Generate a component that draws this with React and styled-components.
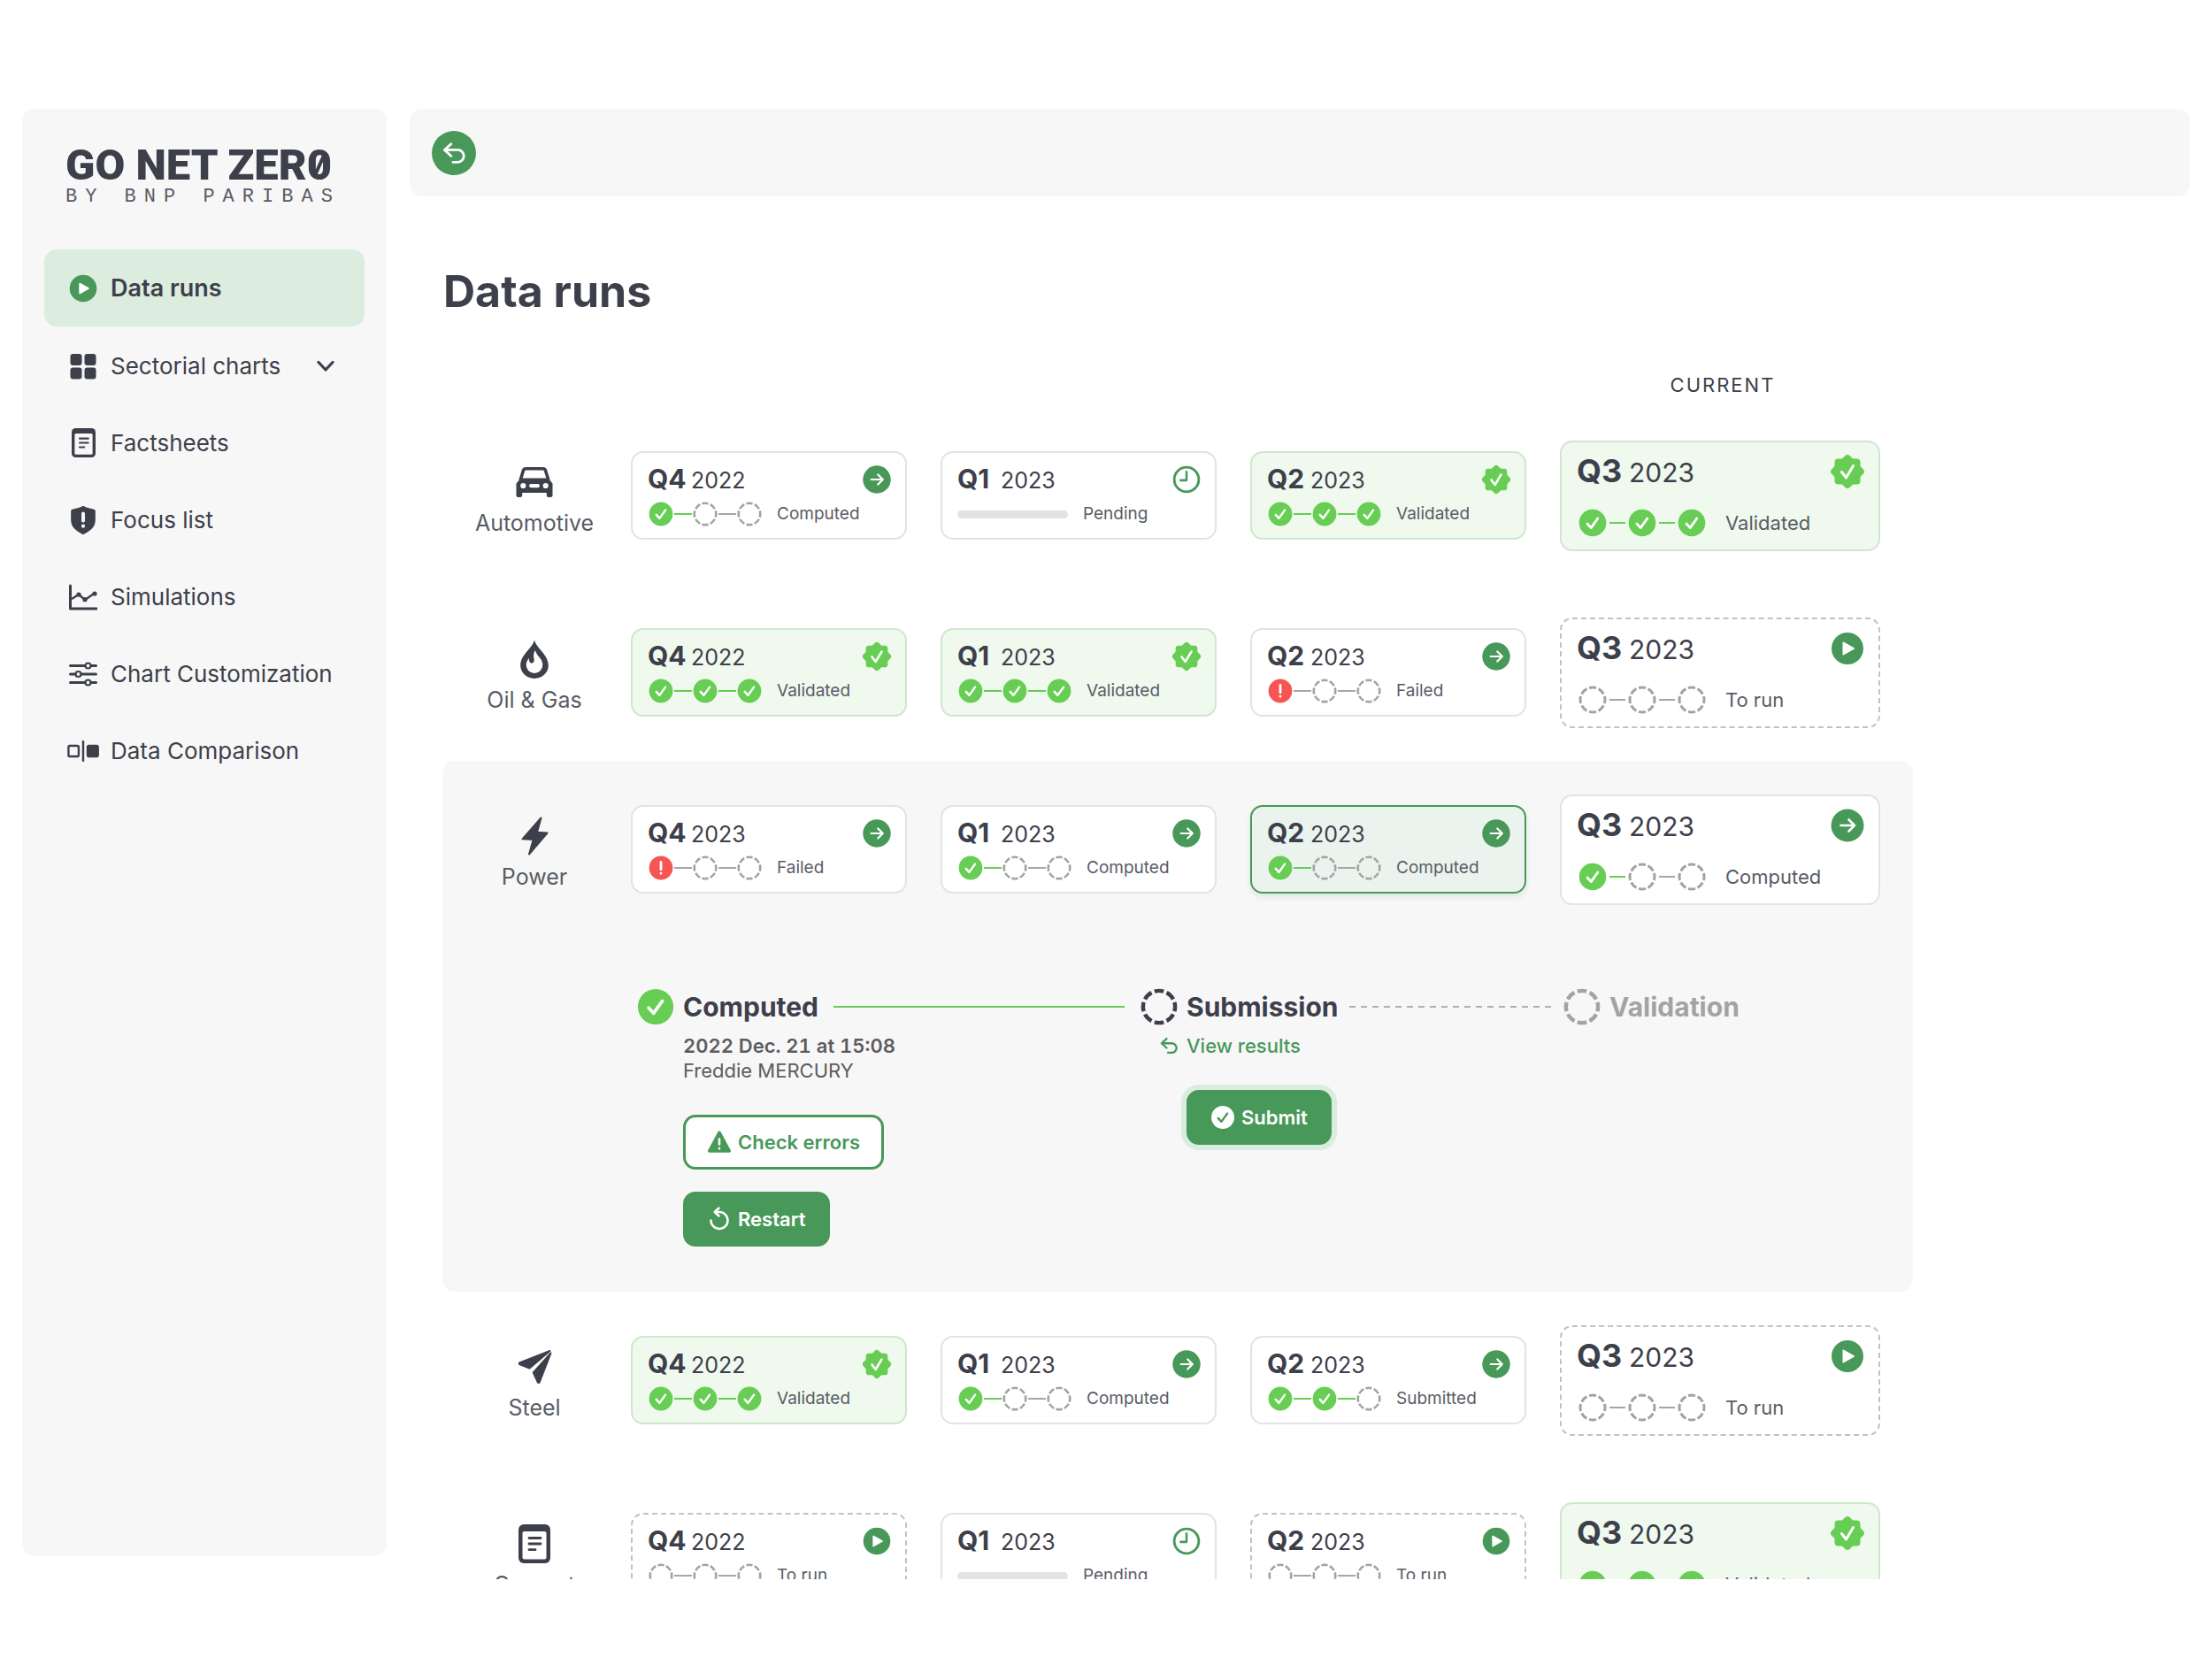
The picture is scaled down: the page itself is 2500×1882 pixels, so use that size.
import React from "react";
import styled, { createGlobalStyle, css } from "styled-components";

const color = {
  ink: "#3d3f4a",
  text: "#5a5c66",
  muted: "#a3a3a3",
  line: "#a6a6a6",
  panel: "#f7f7f7",
  border: "#e3e3e3",
  green: "#489959",
  lime: "#68cd54",
  mint: "#dcecdf",
  mintCard: "#eff9ee",
  mintBorder: "#cfe7cd",
  red: "#f65554",
};

const Global = createGlobalStyle`
  *, *::before, *::after { box-sizing: border-box; }
  body { margin: 0; background: #fff; color: ${color.ink}; font-family: Inter, "Liberation Sans", sans-serif; }
  h1, h2, p, ul { margin: 0; padding: 0; }
  ul { list-style: none; }
  button { font: inherit; color: inherit; cursor: pointer; }
  a { color: inherit; text-decoration: none; }
  svg { display: block; flex: none; }
`;

/* ---------- layout ---------- */

const Page = styled.div`
  display: flex;
  gap: 26px;
  height: 100vh;
  padding: 123px 25px 97px;
`;

const Sidebar = styled.aside`
  flex: none;
  width: 412px;
  margin-bottom: 26px;
  padding: 40px 25px;
  border-radius: 14px;
  background: ${color.panel};
`;

const Main = styled.main`
  display: flex;
  flex: 1;
  flex-direction: column;
  min-width: 0;
  overflow: hidden;
`;

const TopBar = styled.header`
  display: flex;
  flex: none;
  align-items: center;
  height: 99px;
  padding: 0 25px;
  border-radius: 14px;
  background: ${color.panel};
`;

const RoundButton = styled.button`
  display: grid;
  place-items: center;
  width: 50px;
  height: 50px;
  padding: 0;
  border: 0;
  border-radius: 50%;
  background: ${color.green};
  color: #fff;
`;

const Content = styled.div`
  flex: 1;
  min-height: 0;
  padding: 75px 37px 0;
  overflow: hidden;
`;

const Board = styled.div`
  max-width: 1662px;
`;

/* ---------- sidebar ---------- */

const Logo = styled.div`
  padding-left: 24px;
  margin-bottom: 47px;
`;

const LogoName = styled.div`
  font: 900 49px/48px Roboto, "Liberation Sans", sans-serif;
  white-space: nowrap;
`;

const SlashedZero = styled.span`
  position: relative;
  &::after {
    content: "";
    position: absolute;
    left: 12px;
    top: 17px;
    width: 4px;
    height: 24px;
    background: ${color.ink};
    transform: rotate(24deg);
  }
`;

const LogoBy = styled.div`
  font: 400 22px/24px "Liberation Mono", monospace;
  letter-spacing: 9px;
  white-space: nowrap;
  color: ${color.text};
`;

const NavLink = styled.a`
  display: flex;
  align-items: center;
  gap: 13px;
  height: 87px;
  padding: 0 34px 0 26px;
  border-radius: 14px;
  font-size: 26px;
  line-height: 32px;
  white-space: nowrap;
  ${(p) =>
    p.$active &&
    css`
      margin-bottom: 1px;
      background: ${color.mint};
      font-size: 27px;
      font-weight: 600;
    `}
`;

const NavIcon = styled.span`
  display: grid;
  place-items: center;
  width: 36px;
`;

const NavText = styled.span`
  flex: 1;
`;

/* ---------- board ---------- */

const Title = styled.h1`
  padding-left: 1px;
  font-size: 50px;
  font-weight: 700;
  line-height: 64px;
`;

const columns = css`
  display: grid;
  grid-template-columns: 142px 312fr 312fr 312fr 362fr;
  column-gap: 38px;
  padding: 0 37px 0 33px;
`;

const HeadRow = styled.div`
  ${columns}
  margin-top: 60px;
  padding-bottom: 11px;
`;

const HeadCell = styled.div`
  grid-column: 5;
  padding-left: 6px;
  font-size: 22px;
  line-height: 28px;
  letter-spacing: 2px;
  text-align: center;
`;

const Sector = styled.section`
  border-radius: 14px;
  background: ${(p) => (p.$open ? color.panel : "transparent")};
`;

const SectorRow = styled.div`
  ${columns}
  align-items: center;
  height: 200px;
`;

const SectorLabel = styled.div`
  display: flex;
  flex-direction: column;
  align-items: center;
  gap: 10px;
  padding-top: 8px;
  color: ${color.ink};
`;

const SectorName = styled.h2`
  font-size: 25px;
  font-weight: 400;
  line-height: 28px;
  white-space: nowrap;
  color: ${color.text};
`;

const Card = styled.article`
  padding: ${(p) => (p.$large ? "13px 15px 14px 17px" : "13px 15px 14px 17px")};
  border: 2px solid ${color.border};
  border-radius: 14px;
  background: #fff;
  ${(p) =>
    p.$look === "validated" &&
    css`
      border-color: ${color.mintBorder};
      background: ${color.mintCard};
    `}
  ${(p) =>
    p.$look === "torun" &&
    css`
      border: 2px dashed #c2c2c2;
    `}
  ${(p) =>
    p.$selected &&
    css`
      border-color: ${color.green};
      background: #ebf3ee;
      box-shadow: 0 4px 6px rgba(72, 153, 89, 0.14);
    `}
`;

const CardTop = styled.div`
  display: flex;
  align-items: center;
  justify-content: space-between;
  height: ${(p) => (p.$large ? 40 : 34)}px;
`;

const Period = styled.div`
  display: flex;
  align-items: baseline;
  line-height: 36px;
`;

const Quarter = styled.strong`
  width: ${(p) => (p.$large ? 59 : 49)}px;
  font-size: ${(p) => (p.$large ? 36 : 30)}px;
  font-weight: 700;
`;

const Year = styled.span`
  font-size: ${(p) => (p.$large ? 30 : 25)}px;
`;

const CardAction = styled.button`
  display: block;
  padding: 0;
  border: 0;
  background: none;
`;

const CardBottom = styled.div`
  display: flex;
  align-items: center;
  gap: ${(p) => (p.$large ? 22 : 17)}px;
  height: ${(p) => (p.$large ? 32 : 26)}px;
  margin-top: ${(p) => (p.$large ? 22 : 9)}px;
`;

const Track = styled.div`
  display: flex;
  align-items: center;
  padding-left: ${(p) => (p.$large ? 2 : 1)}px;
`;

const Link = styled.span`
  width: ${(p) => (p.$large ? 18 : 20)}px;
  height: 2px;
  margin: 0 ${(p) => (p.$large ? 3 : 1)}px;
  background: ${(p) => (p.$done ? color.lime : color.line)};
`;

const PendingBar = styled.div`
  width: 125px;
  height: 9px;
  border-radius: 5px;
  background: #e3e3e3;
`;

const Status = styled.span`
  font-size: ${(p) => (p.$large ? 22 : 19)}px;
  line-height: 26px;
  white-space: nowrap;
  color: ${color.text};
`;

/* ---------- run detail ---------- */

const Detail = styled.div`
  display: grid;
  grid-template-columns: 569fr 478fr 358fr;
  padding: 57px 37px 51px 220px;
`;

const StageHead = styled.div`
  display: flex;
  align-items: center;
  gap: 10px;
  height: 42px;
  color: ${(p) => (p.$muted ? color.muted : color.ink)};
`;

const StageName = styled.h2`
  font-size: 30px;
  font-weight: 700;
  line-height: 36px;
`;

const StageLine = styled.span`
  flex: 1;
  height: 2px;
  margin: 0 ${(p) => (p.$dashed ? "11px 0 2px" : "18px 0 7px")};
  background: ${(p) =>
    p.$dashed
      ? "repeating-linear-gradient(90deg, #b0b0b0 0 7px, transparent 7px 13px)"
      : color.lime};
`;

const StageBody = styled.div`
  display: flex;
  flex-direction: column;
  align-items: flex-start;
  margin-top: 9px;
  padding-left: 52px;
  font-size: 22px;
  line-height: 28px;
  color: #5c5c60;
`;

const RunDate = styled.p`
  font-weight: 600;
  font-variant-numeric: tabular-nums;
`;

const ResultsLink = styled.a`
  display: flex;
  align-items: center;
  gap: 10px;
  margin-left: -30px;
  font-weight: 500;
  color: ${color.green};
`;

const Actions = styled.div`
  display: flex;
  flex-direction: column;
  align-items: flex-start;
  gap: 25px;
  margin-top: 36px;
`;

const Button = styled.button`
  display: flex;
  align-items: center;
  gap: 7px;
  height: 62px;
  padding: 0 24px;
  border: 3px solid ${color.green};
  border-radius: 14px;
  background: ${(p) => (p.$outline ? "#fff" : color.green)};
  font-size: 22px;
  font-weight: 600;
  color: ${(p) => (p.$outline ? color.green : "#fff")};
  ${(p) =>
    p.$focus &&
    css`
      box-shadow: 0 0 0 6px #d9ecdd;
    `}
`;

/* ---------- icons ---------- */

const ReturnIcon = ({ size, width = 2.6 }) => (
  <svg width={size} height={size} viewBox="0 0 24 24" fill="none" stroke="currentColor" strokeWidth={width} strokeLinecap="round" strokeLinejoin="round">
    <path d="M9 2.5 2.2 8.7 9 15M2.2 8.7H16a6.4 6.4 0 0 1 0 12.8h-5" />
  </svg>
);

const PlayDisc = ({ size }) => (
  <svg width={size} height={size} viewBox="0 0 40 40">
    <circle cx="20" cy="20" r="18" fill={color.green} />
    <path d="M15.5 13.5v13L27 20z" fill="#fff" stroke="#fff" strokeWidth="2" strokeLinejoin="round" />
  </svg>
);

const ArrowDisc = ({ size }) => (
  <svg width={size} height={size} viewBox="0 0 40 40">
    <circle cx="20" cy="20" r="18.5" fill={color.green} />
    <path d="M12.5 20h15.5M21.5 13.5l6.5 6.5-6.5 6.5" fill="none" stroke="#fff" strokeWidth="2.6" strokeLinecap="round" strokeLinejoin="round" />
  </svg>
);

const ClockIcon = ({ size }) => (
  <svg width={size} height={size} viewBox="0 0 40 40" fill="none" stroke={color.green} strokeWidth="3.4">
    <circle cx="20" cy="20" r="16.3" />
    <path d="M20 8.5V21H11" strokeWidth="3" strokeLinejoin="round" />
  </svg>
);

const BadgeIcon = ({ size }) => (
  <svg width={size} height={size} viewBox="0 0 40 40">
    <g fill={color.lime}>
      <rect x="5.5" y="5.5" width="29" height="29" rx="4" />
      <rect x="5.5" y="5.5" width="29" height="29" rx="4" transform="rotate(45 20 20)" />
    </g>
    <path d="M13.5 20.5l5 6.5 8-13.5" fill="none" stroke="#fff" strokeWidth="3" strokeLinecap="round" strokeLinejoin="round" />
  </svg>
);

const Check = ({ stroke = "#fff" }) => (
  <path d="M10 17l4.2 4.6L21.8 11" fill="none" stroke={stroke} strokeWidth="2.8" strokeLinecap="round" strokeLinejoin="round" />
);

const StepIcon = ({ state, size, ring = color.muted, ringWidth = 3 }) => (
  <svg width={size} height={size} viewBox="0 0 32 32">
    {state === "done" && (
      <>
        <circle cx="16" cy="16" r="15.3" fill={color.lime} />
        <Check />
      </>
    )}
    {state === "failed" && (
      <>
        <circle cx="16" cy="16" r="15.3" fill={color.red} />
        <path d="M16 8.5v9.5M16 23v.2" stroke="#fff" strokeWidth="3.2" strokeLinecap="round" />
      </>
    )}
    {state === "todo" && (
      <circle cx="16" cy="16" r={15.5 - ringWidth / 2} fill="none" stroke={ring} strokeWidth={ringWidth} pathLength="80" strokeDasharray="7.5 2.5" strokeDashoffset="3.75" />
    )}
  </svg>
);

const GridIcon = () => (
  <svg width="32" height="32" viewBox="0 0 32 32" fill={color.ink}>
    <rect x="1.5" y="2" width="13" height="13" rx="3" />
    <rect x="17.5" y="2" width="13" height="13" rx="3" />
    <rect x="1.5" y="17.5" width="13" height="13" rx="3" />
    <rect x="17.5" y="17.5" width="13" height="13" rx="3" />
  </svg>
);

const DocIcon = ({ size, ground = "#fff" }) => (
  <svg width={size} height={size} viewBox="0 0 44 44">
    <rect x="4" width="36" height="44" rx="6" fill={color.ink} />
    <rect x="8.5" y="8" width="27" height="31.5" rx="2" fill={ground} />
    <path d="M16 15.5h13M16 22h13M16 28.7h7" stroke={color.ink} strokeWidth="2.8" strokeLinecap="round" />
  </svg>
);

const ShieldIcon = () => (
  <svg width="34" height="34" viewBox="0 0 34 34">
    <path d="M17 .8c4 2.2 8.5 3.2 12.3 4a2 2 0 0 1 1.5 2V17c0 8-6.3 12.5-13.8 16.3C9.5 29.5 3.2 25 3.2 17V6.8a2 2 0 0 1 1.5-2C8.5 4 13 3 17 .8z" fill={color.ink} />
    <path d="M17 9.5v8M17 23.5v.2" stroke="#f7f7f7" strokeWidth="4" strokeLinecap="round" />
  </svg>
);

const ChartIcon = () => (
  <svg width="32" height="32" viewBox="0 0 32 32" fill="none" stroke={color.ink}>
    <path d="M1.5 3v26H31" strokeWidth="3" strokeLinecap="round" strokeLinejoin="round" />
    <path d="M3 18l8-5 7 6 11-7.5" strokeWidth="2.4" />
    <g fill={color.ink} stroke="none">
      <circle cx="11" cy="13" r="2.6" />
      <circle cx="18" cy="18.7" r="2.6" />
      <circle cx="29" cy="12" r="2.6" />
    </g>
  </svg>
);

const SlidersIcon = () => (
  <svg width="32" height="32" viewBox="0 0 32 32" fill="#f7f7f7" stroke={color.ink} strokeLinecap="round">
    <path d="M1.5 6.5h29M1.5 16h29M1.5 25.5h29" strokeWidth="3" />
    <g strokeWidth="2.2">
      <circle cx="21.5" cy="6.5" r="3" />
      <circle cx="10.5" cy="16" r="3" />
      <circle cx="21.5" cy="25.5" r="3" />
    </g>
  </svg>
);

const CompareIcon = () => (
  <svg width="36" height="24" viewBox="0 0 36 24" fill="none" stroke={color.ink} strokeWidth="2.4">
    <rect x="1.4" y="6" width="11.5" height="12" rx="1.5" />
    <path d="M18 1v22" strokeLinecap="round" />
    <rect x="23" y="6" width="11.7" height="12" rx="1.5" fill={color.ink} />
  </svg>
);

const ChevronIcon = () => (
  <svg width="20" height="14" viewBox="0 0 20 14" fill="none" stroke={color.ink} strokeWidth="3.2" strokeLinecap="round" strokeLinejoin="round">
    <path d="M2 2.5l8 8.5 8-8.5" />
  </svg>
);

const CarIcon = () => (
  <svg width="44" height="44" viewBox="0 0 44 44">
    <path d="M6 20L9.5 8.7A3 3 0 0 1 12.3 6.7H31.7A3 3 0 0 1 34.5 8.7L38 20" fill="none" stroke={color.ink} strokeWidth="3.6" />
    <path d="M6.5 17.5h31l5 6V37a2 2 0 0 1-2 2h-2.7a2 2 0 0 1-2-2v-3H8.2v3a2 2 0 0 1-2 2H3.5a2 2 0 0 1-2-2V23.5z" fill={color.ink} />
    <g fill="#fff">
      <circle cx="9.3" cy="26" r="3.1" />
      <circle cx="34.7" cy="26" r="3.1" />
      <rect x="16" y="24" width="12" height="4.2" rx="2.1" />
    </g>
  </svg>
);

const FlameIcon = () => (
  <svg width="44" height="44" viewBox="0 0 44 44">
    <path d="M22 .5C24.5 10 37.8 17 37.8 29A15.8 15 0 0 1 6.2 29C6.2 17 19.5 10 22 .5z" fill={color.ink} />
    <path d="M23 12c.8 6 8.3 9 8.3 16.5a9.3 9.6 0 0 1-18.6 0c0-3 1.3-5.500 3.300-7.500-.3 3 .6 5.500 3 5.500 2.600 0 3-2.500 2.400-5.500-.6-3.500-.4-6.500 1.600-9z" fill="#fff" />
  </svg>
);

const BoltIcon = () => (
  <svg width="44" height="44" viewBox="0 0 44 44">
    <path d="M29.5 1.5L8.5 25.3l12.2.8L16 42.5l20.5-24-11.5-.8z" fill={color.ink} stroke={color.ink} strokeWidth="2" strokeLinejoin="round" />
  </svg>
);

const PlaneIcon = () => (
  <svg width="44" height="44" viewBox="0 0 44 44" fill={color.ink} stroke={color.ink} strokeWidth="2" strokeLinejoin="round">
    <path d="M39.5 4L5 17.5v1.5l11.5 4.5z" />
    <path d="M40.5 6.5L27.5 39.8h-1.5L20.8 28.5z" />
  </svg>
);

const WarningIcon = () => (
  <svg width="28" height="28" viewBox="0 0 28 28">
    <path d="M14 3.2L25.3 24H2.7z" fill={color.green} stroke={color.green} strokeWidth="3.5" strokeLinejoin="round" />
    <path d="M14 10.5v6M14 21v.2" stroke="#fff" strokeWidth="2.6" strokeLinecap="round" />
  </svg>
);

const RestartIcon = () => (
  <svg width="28" height="28" viewBox="0 0 28 28" fill="none" stroke="#fff" strokeWidth="2.5" strokeLinecap="round" strokeLinejoin="round">
    <path d="M13.5 1.5L8.7 6l4.8 4.5M9 6h5a9.5 9.5 0 1 1-9.5 9.5" />
  </svg>
);

const SubmitIcon = () => (
  <svg width="28" height="28" viewBox="0 0 32 32">
    <circle cx="16" cy="16" r="14.8" fill="#fff" />
    <Check stroke={color.green} />
  </svg>
);

/* ---------- data ---------- */

const NAV = [
  { label: "Data runs", icon: <PlayDisc size={34} />, active: true },
  { label: "Sectorial charts", icon: <GridIcon />, more: true },
  { label: "Factsheets", icon: <DocIcon size={33} ground="#f7f7f7" /> },
  { label: "Focus list", icon: <ShieldIcon /> },
  { label: "Simulations", icon: <ChartIcon /> },
  { label: "Chart Customization", icon: <SlidersIcon /> },
  { label: "Data Comparison", icon: <CompareIcon /> },
];

const STATUS = {
  computed: { label: "Computed", steps: ["done", "todo", "todo"], action: "open" },
  submitted: { label: "Submitted", steps: ["done", "done", "todo"], action: "open" },
  validated: { label: "Validated", steps: ["done", "done", "done"] },
  failed: { label: "Failed", steps: ["failed", "todo", "todo"], action: "open" },
  torun: { label: "To run", steps: ["todo", "todo", "todo"], action: "run" },
  pending: { label: "Pending" },
};

const SECTORS = [
  { name: "Automotive", icon: <CarIcon />, runs: [["Q4", 2022, "computed"], ["Q1", 2023, "pending"], ["Q2", 2023, "validated"], ["Q3", 2023, "validated"]] },
  { name: "Oil & Gas", icon: <FlameIcon />, runs: [["Q4", 2022, "validated"], ["Q1", 2023, "validated"], ["Q2", 2023, "failed"], ["Q3", 2023, "torun"]] },
  { name: "Power", icon: <BoltIcon />, selected: 2, runs: [["Q4", 2023, "failed"], ["Q1", 2023, "computed"], ["Q2", 2023, "computed"], ["Q3", 2023, "computed"]] },
  { name: "Steel", icon: <PlaneIcon />, runs: [["Q4", 2022, "validated"], ["Q1", 2023, "computed"], ["Q2", 2023, "submitted"], ["Q3", 2023, "torun"]] },
  { name: "Cement", icon: <DocIcon size={44} />, runs: [["Q4", 2022, "torun"], ["Q1", 2023, "pending"], ["Q2", 2023, "torun"], ["Q3", 2023, "validated"]] },
];

/* ---------- components ---------- */

function CardMark({ status, size }) {
  const { action } = STATUS[status];
  if (action === "run") {
    return <CardAction type="button" aria-label="Run"><PlayDisc size={size} /></CardAction>;
  }
  if (action === "open") {
    return <CardAction type="button" aria-label="Open run"><ArrowDisc size={size} /></CardAction>;
  }
  return status === "validated" ? <BadgeIcon size={size} /> : <ClockIcon size={size} />;
}

function RunCard({ quarter, year, status, large, selected }) {
  const { label, steps } = STATUS[status];
  return (
    <Card $look={status} $large={large} $selected={selected}>
      <CardTop $large={large}>
        <Period>
          <Quarter $large={large}>{quarter}</Quarter>
          <Year $large={large}>{year}</Year>
        </Period>
        <CardMark status={status} size={large ? 40 : 34} />
      </CardTop>
      <CardBottom $large={large}>
        {steps ? (
          <Track $large={large}>
            {steps.map((state, i) => (
              <React.Fragment key={i}>
                {i > 0 && <Link $large={large} $done={steps[i - 1] === "done"} />}
                <StepIcon state={state} size={large ? 32 : 28} />
              </React.Fragment>
            ))}
          </Track>
        ) : (
          <PendingBar />
        )}
        <Status $large={large}>{label}</Status>
      </CardBottom>
    </Card>
  );
}

function RunDetail() {
  return (
    <Detail>
      <div>
        <StageHead>
          <StepIcon state="done" size={42} />
          <StageName>Computed</StageName>
          <StageLine />
        </StageHead>
        <StageBody>
          <RunDate>2022 Dec. 21 at 15:08</RunDate>
          <p>Freddie MERCURY</p>
          <Actions>
            <Button type="button" $outline><WarningIcon />Check errors</Button>
            <Button type="button"><RestartIcon />Restart</Button>
          </Actions>
        </StageBody>
      </div>
      <div>
        <StageHead>
          <StepIcon state="todo" size={42} ring={color.ink} ringWidth={3.4} />
          <StageName>Submission</StageName>
          <StageLine $dashed />
        </StageHead>
        <StageBody>
          <ResultsLink href="#results"><ReturnIcon size={20} width={2.8} />View results</ResultsLink>
          <Actions>
            <Button type="button" $focus><SubmitIcon />Submit</Button>
          </Actions>
        </StageBody>
      </div>
      <div>
        <StageHead $muted>
          <StepIcon state="todo" size={42} ringWidth={3.4} />
          <StageName>Validation</StageName>
        </StageHead>
      </div>
    </Detail>
  );
}

export default function App() {
  return (
    <>
      <Global />
      <Page>
        <Sidebar>
          <Logo>
            <LogoName>GO NET ZER<SlashedZero>0</SlashedZero></LogoName>
            <LogoBy>BY BNP PARIBAS</LogoBy>
          </Logo>
          <nav aria-label="Main">
            <ul>
              {NAV.map((item) => (
                <li key={item.label}>
                  <NavLink href="#" $active={item.active} aria-current={item.active ? "page" : undefined}>
                    <NavIcon>{item.icon}</NavIcon>
                    <NavText>{item.label}</NavText>
                    {item.more && <ChevronIcon />}
                  </NavLink>
                </li>
              ))}
            </ul>
          </nav>
        </Sidebar>
        <Main>
          <TopBar>
            <RoundButton type="button" aria-label="Back"><ReturnIcon size={26} /></RoundButton>
          </TopBar>
          <Content>
            <Board>
              <Title>Data runs</Title>
              <HeadRow>
                <HeadCell>CURRENT</HeadCell>
              </HeadRow>
              {SECTORS.map((sector) => (
                <Sector key={sector.name} $open={sector.selected !== undefined}>
                  <SectorRow>
                    <SectorLabel>
                      {sector.icon}
                      <SectorName>{sector.name}</SectorName>
                    </SectorLabel>
                    {sector.runs.map(([quarter, year, status], i) => (
                      <RunCard key={quarter} quarter={quarter} year={year} status={status} large={i === 3} selected={sector.selected === i} />
                    ))}
                  </SectorRow>
                  {sector.selected !== undefined && <RunDetail />}
                </Sector>
              ))}
            </Board>
          </Content>
        </Main>
      </Page>
    </>
  );
}
